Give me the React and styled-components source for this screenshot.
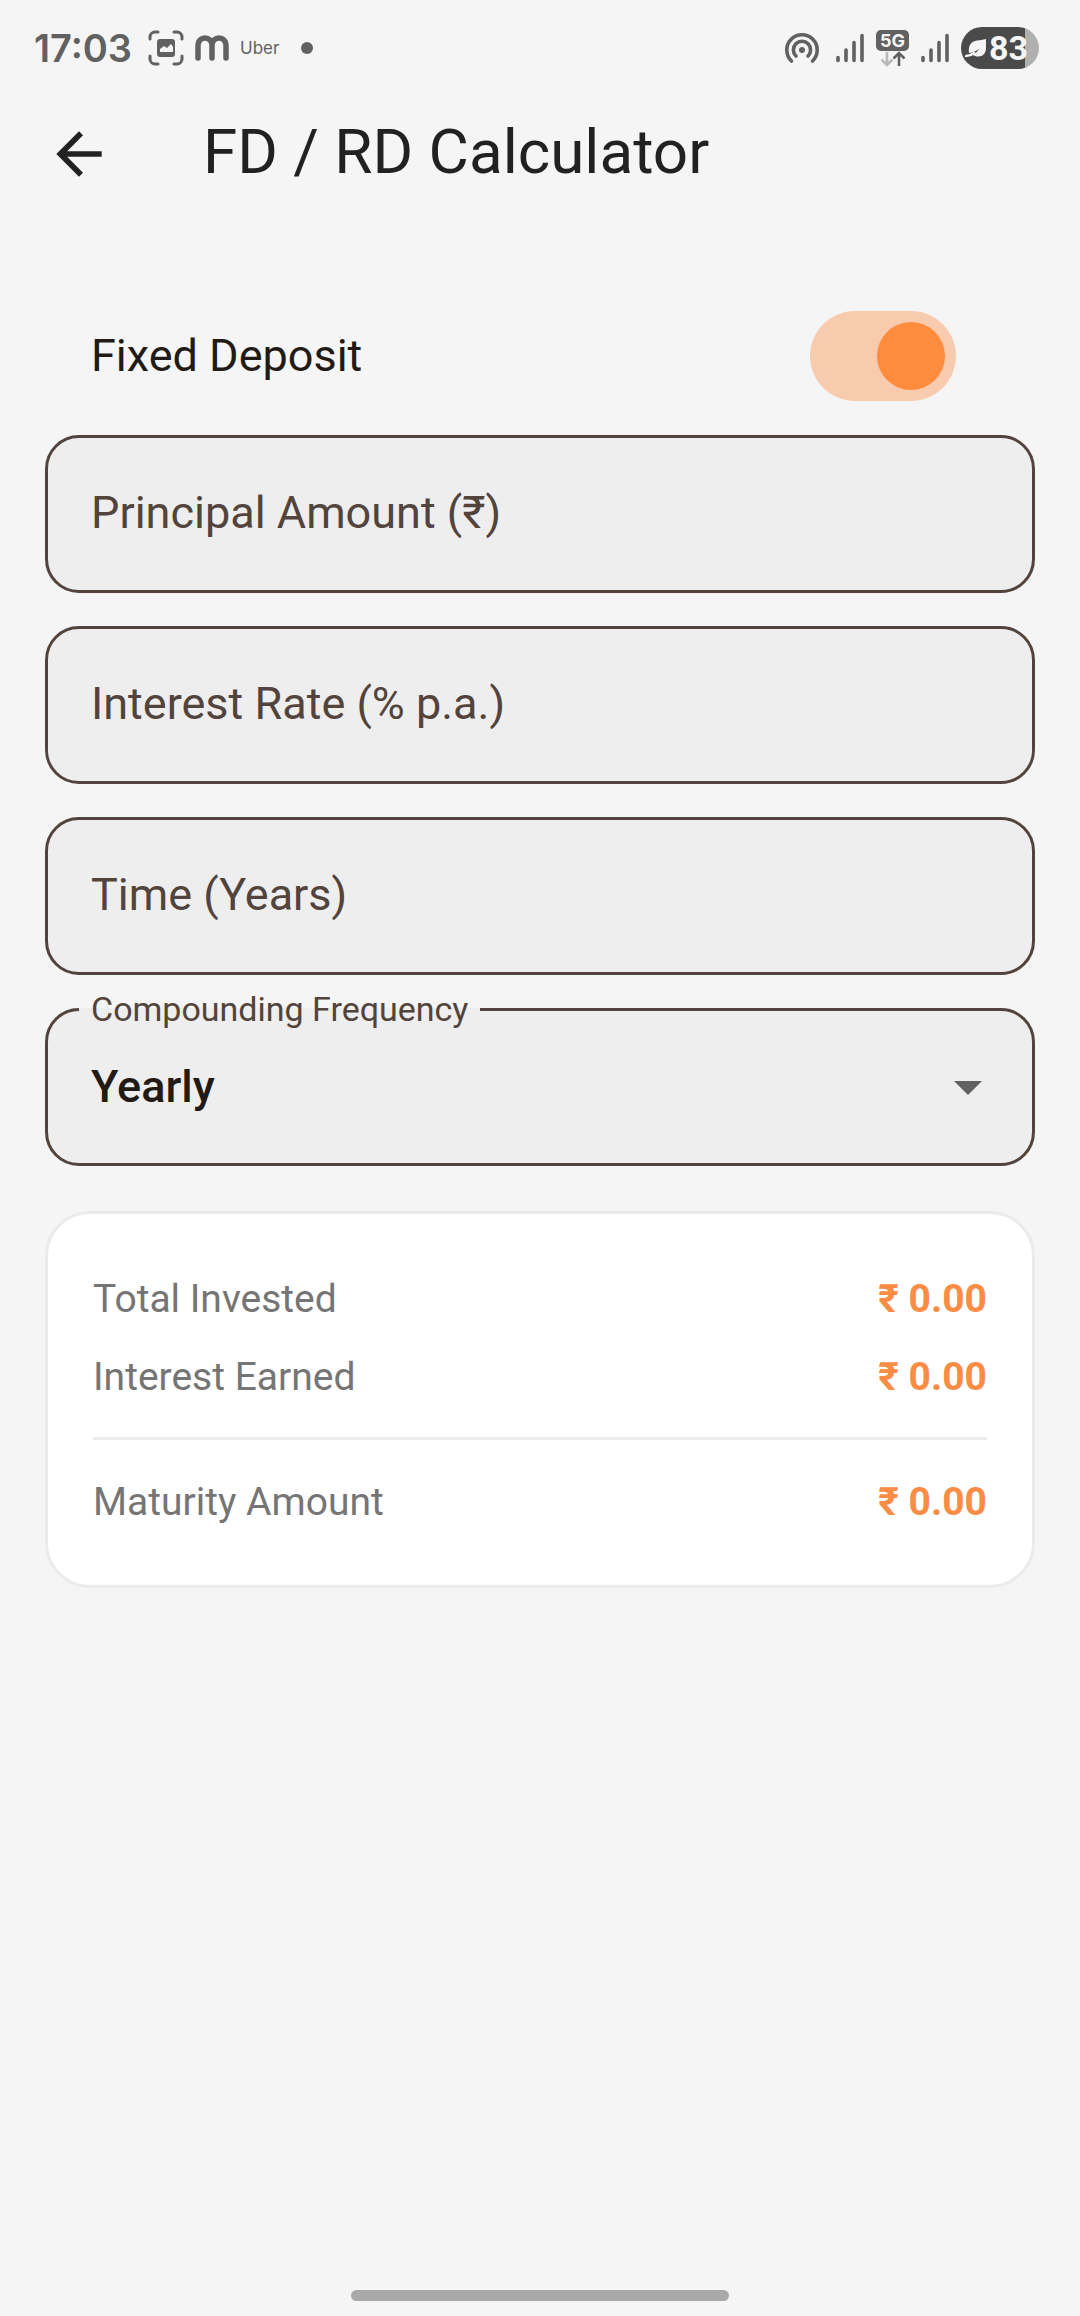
import React, { useState } from 'react';
import styled, { createGlobalStyle } from 'styled-components';

const GlobalStyle = createGlobalStyle`
  * {
    box-sizing: border-box;
  }

  body {
    margin: 0;
    background: #f5f5f5;
    font-family: Roboto, sans-serif;
  }
`

const Screen = styled.div`
  display: flex;
  flex-direction: column;
  min-height: 100vh;
`

const StatusBar = styled.div`
  display: flex;
  justify-content: space-between;
  align-items: center;
  height: 75px;
  padding: 21px 41px 0 34px;
  color: #616161;
  font-family: Inter, sans-serif;
`

const StatusGroup = styled.div`
  display: flex;
  align-items: center;
  gap: ${props => props.$gap};
`

const Clock = styled.span`
  font-size: 38px;
  font-weight: 600;
  margin-right: 6px;
`

const Carrier = styled.span`
  font-size: 17px;
`

const Dot = styled.span`
  width: 12px;
  height: 12px;
  margin-left: 12px;
  border-radius: 50%;
  background: #616161;
`

const Network = styled.span`
  display: flex;
  flex-direction: column;
  align-items: center;
`

const NetworkType = styled.span`
  width: 33px;
  border-radius: 5px;
  background: #616161;
  color: #f5f5f5;
  font-size: 18px;
  font-weight: 700;
  line-height: 21px;
  text-align: center;
`

const Battery = styled.span`
  display: flex;
  align-items: center;
  gap: 2px;
  height: 42px;
  width: 78px;
  padding-left: 4px;
  border-radius: 21px;
  background: linear-gradient(to right, #4a4a4a 82%, #b0b0b0 82%);
  color: #f5f5f5;
  font-family: Roboto, sans-serif;
  font-size: 34px;
  font-weight: 700;
`

const AppBar = styled.header`
  display: flex;
  align-items: center;
  height: 157px;
  padding: 0 45px;
  gap: 90px;
`

const BackButton = styled.button`
  display: flex;
  padding: 0;
  border: none;
  background: none;
  color: #212121;
`

const Title = styled.h1`
  margin: 0;
  padding-bottom: 4px;
  color: #212121;
  font-size: 62px;
  font-weight: 400;
`

const Content = styled.main`
  flex: 1;
  padding: 45px;
`

const SwitchRow = styled.div`
  display: flex;
  justify-content: space-between;
  align-items: center;
  height: 158px;
  padding: 0 79px 0 46px;
`

const SwitchLabel = styled.label`
  padding-bottom: 2px;
  color: #221a15;
  font-size: 45px;
`

const Switch = styled.input`
  display: flex;
  align-items: center;
  appearance: none;
  width: 146px;
  height: 90px;
  margin: 0;
  padding: 0 11px;
  border-radius: 45px;
  background: #f9cbae;

  &::before {
    content: '';
    width: 68px;
    height: 68px;
    border-radius: 50%;
    background: #ff8b3d;
  }

  &:checked::before {
    margin-left: auto;
  }
`

const Fields = styled.div`
  display: flex;
  flex-direction: column;
  gap: 33px;
`

const Field = styled.div`
  position: relative;
`

const FieldLabel = styled.label`
  position: absolute;
  left: 46px;
  top: 51px;
  color: #52443c;
  font-size: 45px;
  line-height: 54px;
  pointer-events: none;
`

const Input = styled.input`
  display: block;
  width: 100%;
  height: 158px;
  padding: 0 43px;
  border: 3px solid #52443c;
  border-radius: 34px;
  outline: none;
  background: #eeeeee;
  color: #221a15;
  font-family: inherit;
  font-size: 45px;

  &:focus + ${FieldLabel},
  &:not(:placeholder-shown) + ${FieldLabel} {
    top: -20px;
    font-size: 34px;
    line-height: 40px;
  }
`

/* the legend stands half above the border, so the box is pulled up by that half */
const SelectBox = styled.fieldset`
  position: relative;
  min-width: 0;
  margin: -19px 0 0;
  padding: 0;
  border: 3px solid #52443c;
  border-radius: 34px;
  background: #eeeeee;
`

const Legend = styled.legend`
  margin-left: 31px;
  padding: 0 12px;
  color: #52443c;
  font-size: 34px;
  line-height: 40px;
`

const Select = styled.select`
  display: block;
  appearance: none;
  width: 100%;
  height: 134px;
  padding: 0 43px 20px;
  border: none;
  outline: none;
  background: transparent;
  color: #221a15;
  font-family: inherit;
  font-size: 45px;
  font-weight: 500;
`

const Arrow = styled.svg`
  position: absolute;
  right: 50px;
  top: 52px;
  pointer-events: none;
`

const Card = styled.section`
  margin-top: 45px;
  padding: 45px;
  border: 3px solid #ebebeb;
  border-radius: 45px;
  background: #ffffff;
`

const Row = styled.div`
  display: flex;
  justify-content: space-between;
  align-items: center;
  height: 78px;
  padding-top: 2px;
  color: #757575;
  font-size: 39px;
`

const Amount = styled.strong`
  color: #fb8c44;
  font-weight: 700;
`

const Divider = styled.hr`
  height: 3px;
  margin: 22px 0;
  border: none;
  background: #ebebeb;
`

const HomeBar = styled.div`
  align-self: center;
  width: 35%;
  height: 11px;
  margin-bottom: 15px;
  border-radius: 6px;
  background: #a9a9a9;
`

const CaptureIcon = () => (
  <svg width="36" height="36" viewBox="0 0 36 36" fill="none" stroke="#616161" strokeWidth="3" strokeLinecap="round">
    <path d="M2 9V7a5 5 0 0 1 5-5h3M26 2h3a5 5 0 0 1 5 5v2M34 26v3a5 5 0 0 1-5 5h-3M10 34H7a5 5 0 0 1-5-5v-3" />
    <rect x="9" y="9" width="18" height="18" rx="3" fill="#616161" stroke="none" />
    <path d="M12 22v-3l4-3 3 2 4-4 2 3v5z" fill="#f5f5f5" stroke="none" />
  </svg>
)

const BrandIcon = () => (
  <svg width="36" height="28" viewBox="0 0 36 28" fill="none" stroke="#616161" strokeWidth="5.500" strokeLinecap="round">
    <path d="M4 24V11a7 7 0 0 1 14 0v13M18 11a7 7 0 0 1 14 0v13" />
  </svg>
)

const HotspotIcon = () => (
  <svg width="40" height="32" viewBox="0 0 40 32" fill="none" stroke="#616161" strokeWidth="3.600" strokeLinecap="round">
    <path d="M7.500 29a15.200 15.200 0 1 1 21 0" />
    <path d="M12 24a8.600 8.600 0 1 1 12 0" />
    <circle cx="18" cy="18" r="3" fill="#616161" stroke="none" />
  </svg>
)

const SignalIcon = () => (
  <svg width="28" height="30" viewBox="0 0 28 30" stroke="#616161" strokeWidth="3.600" strokeLinecap="round">
    <path d="M2 24.500v3M10 17v10.500M18 9.500v18M26 2.500v25" />
  </svg>
)

const DataArrows = () => (
  <svg width="26" height="16" viewBox="0 0 26 16" fill="none" strokeWidth="2.600">
    <path d="M7 1v12.500M1.500 8.500L7 14l5.500-5.500" stroke="#b8b8b8" />
    <path d="M19 15V2.500M13.500 7.500L19 2l5.500 5.500" stroke="#616161" />
  </svg>
)

const LeafIcon = () => (
  <svg width="22" height="20" viewBox="0 0 22 20">
    <path d="M21 1v9c0 5-3 8.500-8 8.500-2 0-4-.5-5.500-2 3-1 5-3 7-6-3 2.500-6 4-10.500 4.500C3 8 6 3 12 2.500c3-.3 6-.5 9-1.500z" fill="#f5f5f5" />
    <path d="M1 18c3 0 5.500-1 8-3" fill="none" stroke="#f5f5f5" strokeWidth="2.500" strokeLinecap="round" />
  </svg>
)

const fields = [
  { id: 'principal', label: 'Principal Amount (₹)' },
  { id: 'rate', label: 'Interest Rate (% p.a.)' },
  { id: 'years', label: 'Time (Years)' },
]

const App = () => {
  const [values, setValues] = useState({ principal: '', rate: '', years: '' });
  const [fixed, setFixed] = useState(true);
  const [frequency, setFrequency] = useState('1');

  const principal = Number(values.principal) || 0;
  const rate = (Number(values.rate) || 0) / 100;
  const years = Number(values.years) || 0;
  const n = Number(frequency);
  const grow = time => (1 + rate / n) ** (n * time);

  let invested = principal;
  let maturity = principal * grow(years);
  if (!fixed) {
    const months = Math.round(years * 12);
    invested = principal * months;
    maturity = 0;
    for (let m = 1; m <= months; m += 1) {
      maturity += principal * grow(m / 12);
    }
  }
  const format = amount => `₹ ${amount.toFixed(2)}`;

  return (
    <Screen>
      <GlobalStyle />
      <StatusBar>
        <StatusGroup $gap="10px">
          <Clock>17:03</Clock>
          <CaptureIcon />
          <BrandIcon />
          <Carrier>Uber</Carrier>
          <Dot />
        </StatusGroup>
        <StatusGroup $gap="12px">
          <HotspotIcon />
          <SignalIcon />
          <Network>
            <NetworkType>5G</NetworkType>
            <DataArrows />
          </Network>
          <SignalIcon />
          <Battery>
            <LeafIcon />
            83
          </Battery>
        </StatusGroup>
      </StatusBar>
      <AppBar>
        <BackButton type="button" aria-label="Back">
          <svg width="68" height="68" viewBox="0 0 24 24" fill="currentColor">
            <path d="M20 11H7.830l5.590-5.590L12 4l-8 8 8 8 1.410-1.410L7.830 13H20v-2z" />
          </svg>
        </BackButton>
        <Title>FD / RD Calculator</Title>
      </AppBar>
      <Content>
        <SwitchRow>
          <SwitchLabel htmlFor="fixed">{fixed ? 'Fixed Deposit' : 'Recurring Deposit'}</SwitchLabel>
          <Switch id="fixed" type="checkbox" role="switch" checked={fixed} onChange={e => setFixed(e.target.checked)} />
        </SwitchRow>
        <Fields>
          {fields.map(({ id, label }) => (
            <Field key={id}>
              <Input
                id={id}
                inputMode="decimal"
                placeholder=" "
                value={values[id]}
                onChange={e => setValues({ ...values, [id]: e.target.value })}
              />
              <FieldLabel htmlFor={id}>{label}</FieldLabel>
            </Field>
          ))}
          <SelectBox>
            <Legend><label htmlFor="frequency">Compounding Frequency</label></Legend>
            <Select id="frequency" value={frequency} onChange={e => setFrequency(e.target.value)}>
              <option value="1">Yearly</option>
              <option value="2">Half-Yearly</option>
              <option value="4">Quarterly</option>
              <option value="12">Monthly</option>
            </Select>
            <Arrow width="28" height="14" viewBox="0 0 28 14">
              <path d="M0 0h28L14 14z" fill="#616161" />
            </Arrow>
          </SelectBox>
        </Fields>
        <Card>
          <Row>
            <span>Total Invested</span>
            <Amount>{format(invested)}</Amount>
          </Row>
          <Row>
            <span>Interest Earned</span>
            <Amount>{format(maturity - invested)}</Amount>
          </Row>
          <Divider />
          <Row>
            <span>Maturity Amount</span>
            <Amount>{format(maturity)}</Amount>
          </Row>
        </Card>
      </Content>
      <HomeBar />
    </Screen>
  )
}


export default App;
